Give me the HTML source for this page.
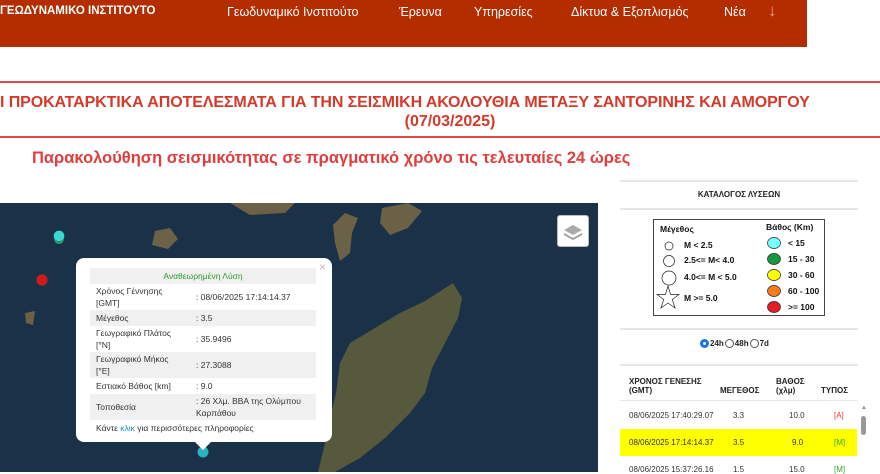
<!DOCTYPE html>
<html><head><meta charset="utf-8">
<style>
*{margin:0;padding:0;box-sizing:border-box}
body{width:880px;height:472px;overflow:hidden;background:#fff;font-family:"Liberation Sans","Noto Sans CJK SC",sans-serif;position:relative}
.nav{position:absolute;left:0;top:0;width:807px;height:47px;background:#b32d00;color:#fff}
.nav span{position:absolute;top:5px;font-size:12.5px}
.logo{font-weight:bold;font-size:11.5px!important;left:0}
.hr{position:absolute;left:0;width:880px;height:2px;background:#e04848}
.t1{position:absolute;left:0;top:94px;width:880px;font-size:16px;font-weight:bold;color:#d43a2a;white-space:nowrap;letter-spacing:-0.1px}
.t2{position:absolute;left:0;width:880px;top:113px;text-align:center;font-size:16px;font-weight:bold;color:#d43a2a;padding-left:20px}
.sub{position:absolute;left:32px;top:149px;font-size:16.5px;font-weight:bold;color:#e03e3e}
.map{position:absolute;left:0;top:203px;width:598px;height:269px;background:#1b3147;overflow:hidden}
.pop{position:absolute;left:76px;top:258px;width:256px;height:184px;background:#fff;border-radius:8px;font-size:8.5px;color:#333}
.pop table{position:absolute;left:14px;top:10px;width:226px;border-collapse:collapse}
.pop td{padding:1px 6px;vertical-align:middle;line-height:12px}
.pop tr.g td{background:#f0f0f0}
.side{position:absolute;left:620px;top:180px;width:238px}
.bar{height:2px;background:#e6e6e6}
.rt{position:absolute;font-size:8px;color:#222}
</style></head><body>
<div class="nav">
<span class="logo">ΓΕΩΔΥΝΑΜΙΚΟ ΙΝΣΤΙΤΟΥΤΟ</span>
<span style="left:227px">Γεωδυναμικό Ινστιτούτο</span>
<span style="left:399px">Έρευνα</span>
<span style="left:474px">Υπηρεσίες</span>
<span style="left:571px">Δίκτυα &amp; Εξοπλισμός</span>
<span style="left:724px">Νέα</span>
<span style="left:768px;top:1px;font-size:17px;color:#e8a080">↓</span>
</div>
<div class="hr" style="top:81px"></div>
<div class="t1">Ι ΠΡΟΚΑΤΑΡΚΤΙΚΑ ΑΠΟΤΕΛΕΣΜΑΤΑ ΓΙΑ ΤΗΝ ΣΕΙΣΜΙΚΗ ΑΚΟΛΟΥΘΙΑ ΜΕΤΑΞΥ ΣΑΝΤΟΡΙΝΗΣ ΚΑΙ ΑΜΟΡΓΟΥ</div>
<div class="t2">(07/03/2025)</div>
<div class="hr" style="top:136px"></div>
<div class="sub">Παρακολούθηση σεισμικότητας σε πραγματικό χρόνο τις τελευταίες 24 ώρες</div>

<div class="map">
<svg width="598" height="269" style="position:absolute;left:0;top:0">
<polygon points="453,80 462,95 458,115 445,140 432,165 425,190 410,210 385,235 360,255 335,269 318,269 325,240 330,215 336,190 340,160 350,140 375,125 400,110 425,98" fill="#56593b"/>
<polygon points="333,22 345,10 358,15 352,30 350,50 340,58 335,40" fill="#6a6146"/>
<polygon points="382,5 408,0 422,8 408,25 390,32 380,20" fill="#6a6146"/>
<polygon points="230,0 295,0 285,10 250,12" fill="#6a6146"/>
<polygon points="155,28 170,25 178,36 168,46 152,42" fill="#6c6248"/>
<polygon points="25,110 35,108 33,122 26,120" fill="#6a6146"/>
<circle cx="59" cy="36" r="5" fill="#2ea06a"/>
<circle cx="59" cy="33" r="5.5" fill="#3ad9d0" stroke="#1a5c60" stroke-width="0.5"/>
<circle cx="42" cy="77" r="5.5" fill="#d8151f" stroke="#550" stroke-width="0.5"/>
<circle cx="203" cy="249" r="5.5" fill="#2bb5c4"/>
</svg>
<div style="position:absolute;left:557px;top:12px;width:32px;height:32px;background:#fff;border-radius:3px;border:1px solid #bbb"><svg width="30" height="30"><polygon points="15,9 24,14 15,19 6,14" fill="#aaa"/><polygon points="6,17 15,22 24,17 24,19 15,24 6,19" fill="#999"/></svg></div>
</div>
<div class="pop">
<span style="position:absolute;right:6px;top:2px;color:#bbb;font-size:12px">×</span>
<table>
<tr class="g"><td colspan="2" style="text-align:center;color:#2a9a2a;padding:2px">Αναθεωρημένη Λύση</td></tr>
<tr><td style="width:100px">Χρόνος Γέννησης<br>[GMT]</td><td>: 08/06/2025 17:14:14.37</td></tr>
<tr class="g"><td style="padding:2px 6px">Μέγεθος</td><td>: 3.5</td></tr>
<tr><td>Γεωγραφικό Πλάτος<br>[°N]</td><td>: 35.9496</td></tr>
<tr class="g"><td>Γεωγραφικό Μήκος<br>[°E]</td><td>: 27.3088</td></tr>
<tr><td style="padding:2px 6px">Εστιακό Βάθος [km]</td><td>: 9.0</td></tr>
<tr class="g"><td>Τοποθεσία</td><td>: 26 Χλμ. ΒΒΑ της Ολύμπου<br>Καρπάθου</td></tr>
<tr><td colspan="2" style="padding:2px 6px">Κάντε <span style="color:#1a8ad0">κλικ</span> για περισσότερες πληροφορίες</td></tr>
</table>
<div style="position:absolute;left:119px;bottom:-8px;width:0;height:0;border-left:8px solid transparent;border-right:8px solid transparent;border-top:8px solid #fff"></div>
</div>

<div class="side">
<div class="bar" style="margin-top:0"></div>
<div style="height:26px;text-align:center;font-size:8px;font-weight:bold;line-height:26px;color:#222">ΚΑΤΑΛΟΓΟΣ ΛΥΣΕΩΝ</div>
<div class="bar"></div>
</div>
<div style="position:absolute;left:653px;top:219px;width:172px;height:97px;border:1px solid #444;font-size:8.5px;font-weight:bold;color:#111">
<span style="position:absolute;left:6px;top:4px">Μέγεθος</span>
<span style="position:absolute;left:112px;top:2px">Βάθος (Km)</span>
<svg width="172" height="97" style="position:absolute;left:0;top:0">
<circle cx="15" cy="26" r="4" fill="#fff" stroke="#222" stroke-width="0.7"/>
<circle cx="15" cy="41" r="5.5" fill="#fff" stroke="#222" stroke-width="0.7"/>
<circle cx="15" cy="58" r="7" fill="#fff" stroke="#222" stroke-width="0.7"/>
<polygon points="14,66 16.6,74.5 25,74.5 18.3,79.5 21,88 14,83 7,88 9.7,79.5 3,74.5 11.4,74.5" fill="#fff" stroke="#222" stroke-width="0.7"/>
<ellipse cx="120" cy="23" rx="6.5" ry="5.5" fill="#7ff" stroke="#222" stroke-width="0.7"/>
<ellipse cx="120" cy="39" rx="6.5" ry="5.5" fill="#1a9640" stroke="#222" stroke-width="0.7"/>
<ellipse cx="120" cy="55" rx="6.5" ry="5.5" fill="#ff0" stroke="#222" stroke-width="0.7"/>
<ellipse cx="120" cy="71" rx="6.5" ry="5.5" fill="#f87c1c" stroke="#222" stroke-width="0.7"/>
<ellipse cx="120" cy="87" rx="6.5" ry="5.5" fill="#e21d24" stroke="#222" stroke-width="0.7"/>
</svg>
<span style="position:absolute;left:30px;top:20px">M &lt; 2.5</span>
<span style="position:absolute;left:30px;top:35px">2.5&lt;= M&lt; 4.0</span>
<span style="position:absolute;left:30px;top:52px">4.0&lt;= M &lt; 5.0</span>
<span style="position:absolute;left:30px;top:73px">M &gt;= 5.0</span>
<span style="position:absolute;left:134px;top:18px">&lt; 15</span>
<span style="position:absolute;left:134px;top:34px">15 - 30</span>
<span style="position:absolute;left:134px;top:50px">30 - 60</span>
<span style="position:absolute;left:134px;top:66px">60 - 100</span>
<span style="position:absolute;left:134px;top:82px">&gt;= 100</span>
</div>
<div class="bar" style="position:absolute;left:620px;top:328px;width:238px"></div>
<div style="position:absolute;left:700px;top:339px;font-size:8px;font-weight:bold;color:#222;display:flex;align-items:center;gap:1px">
<span style="width:9px;height:9px;border-radius:50%;background:#fff;border:3px solid #1a73e8;display:inline-block"></span>24h
<span style="width:9px;height:9px;border-radius:50%;border:1px solid #555;display:inline-block"></span>48h
<span style="width:9px;height:9px;border-radius:50%;border:1px solid #555;display:inline-block"></span>7d
</div>
<div class="bar" style="position:absolute;left:620px;top:364px;width:238px"></div>
<div class="rt" style="left:629px;top:377px;font-weight:bold;line-height:9px">ΧΡΟΝΟΣ ΓΕΝΕΣΗΣ<br>(GMT)</div>
<div class="rt" style="left:720px;top:386px;font-weight:bold">ΜΕΓΕΘΟΣ</div>
<div class="rt" style="left:776px;top:377px;font-weight:bold;line-height:9px">ΒΑΘΟΣ<br>(χλμ)</div>
<div class="rt" style="left:821px;top:386px;font-weight:bold">ΤΥΠΟΣ</div>
<div class="bar" style="position:absolute;left:620px;top:400px;width:238px;height:1px"></div>
<div style="position:absolute;left:620px;top:429px;width:237px;height:27px;background:#ffff00"></div>
<div class="rt" style="left:629px;top:411px;color:#333">08/06/2025 17:40:29.07</div>
<div class="rt" style="left:733px;top:411px;color:#333">3.3</div>
<div class="rt" style="left:789px;top:411px;color:#333">10.0</div>
<div class="rt" style="left:834px;top:411px;color:#e33">[A]</div>
<div class="rt" style="left:629px;top:438px;color:#333">08/06/2025 17:14:14.37</div>
<div class="rt" style="left:733px;top:438px;color:#333">3.5</div>
<div class="rt" style="left:792px;top:438px;color:#333">9.0</div>
<div class="rt" style="left:834px;top:438px;color:#3a3">[M]</div>
<div class="rt" style="left:629px;top:465px;color:#333">08/06/2025 15:37:26.16</div>
<div class="rt" style="left:733px;top:465px;color:#333">1.5</div>
<div class="rt" style="left:789px;top:465px;color:#333">15.0</div>
<div class="rt" style="left:834px;top:465px;color:#3a3">[M]</div>
<div style="position:absolute;left:861px;top:405px;font-size:6px;color:#888">▲</div>
<div style="position:absolute;left:861px;top:416px;width:5px;height:19px;background:#999;border-radius:3px"></div>
</body></html>
